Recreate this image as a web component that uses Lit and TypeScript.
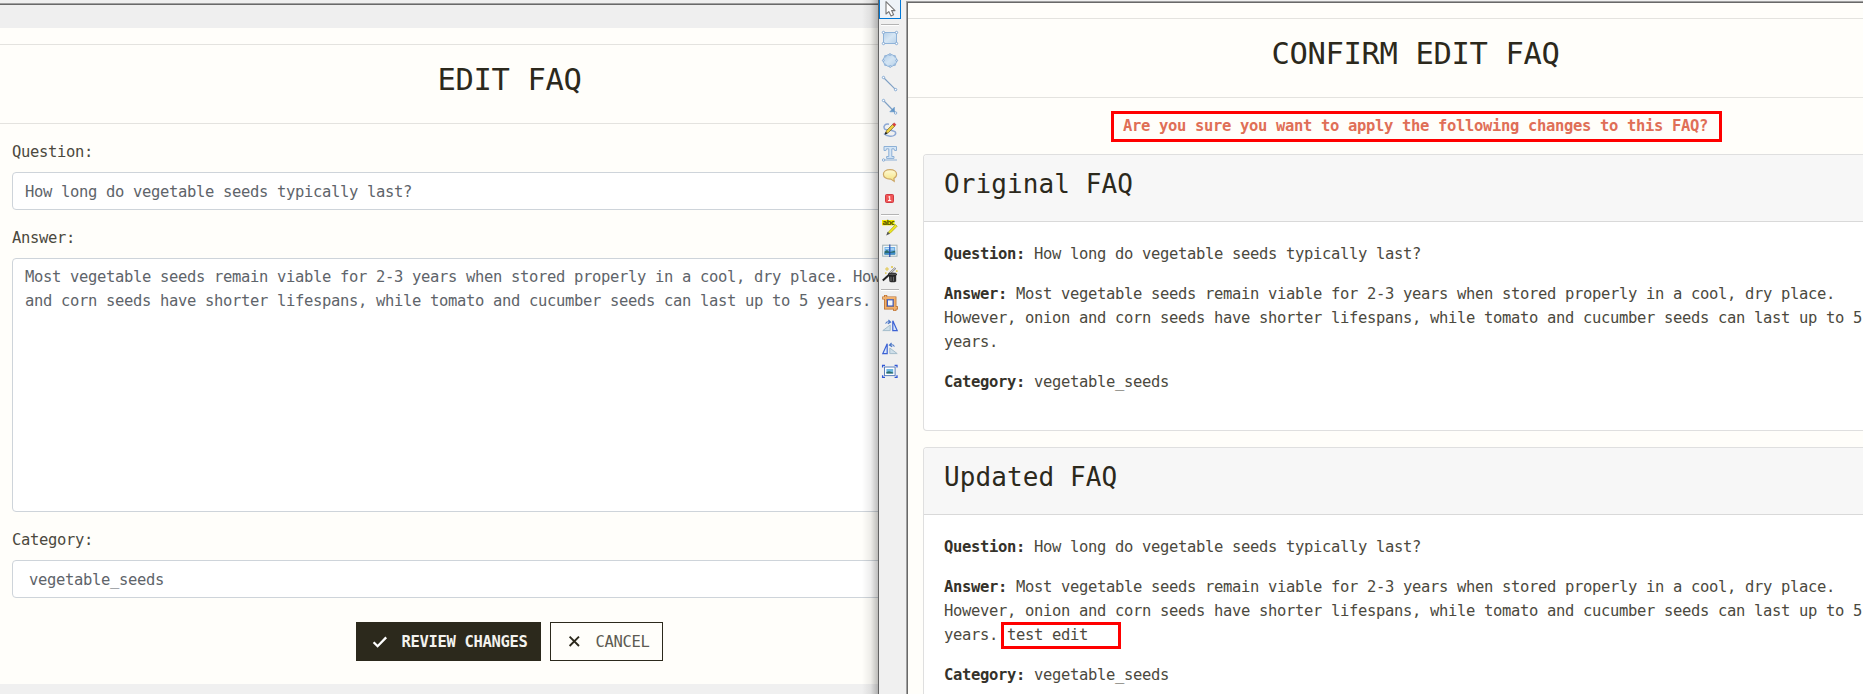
import { LitElement, html, css, svg } from "lit";
import { customElement, property } from "lit/decorators.js";

const ANSWER =
  "Most vegetable seeds remain viable for 2-3 years when stored properly in a cool, dry place. However, onion and corn seeds have shorter lifespans, while tomato and cucumber seeds can last up to 5 years.";
const QUESTION = "How long do vegetable seeds typically last?";

const handle = (x: number, y: number, r = 1.2) =>
  svg`<circle cx=${x} cy=${y} r=${r} fill="#fff" stroke="#7aa3cf" stroke-width=".9"/>`;

const icons = {
  cursor: svg`<path d="M7 2.6V15L9.8 12.6L12 17L14.6 15.8L12.6 11.6H16Z" fill="#fff" stroke="#777" stroke-width="1.1" stroke-linejoin="round"/>`,
  rect: svg`<defs><linearGradient id="g" x1="0" y1="0" x2="1" y2="1"><stop offset="0" stop-color="#b4cfe8"/><stop offset=".5" stop-color="#d6e6f4"/><stop offset="1" stop-color="#b9d2ea"/></linearGradient></defs>
    <rect x="4.5" y="5.5" width="13" height="11" fill="url(#g)" stroke="#8fb3d9"/>${handle(4.5, 5.5)}${handle(17.5, 5.5)}${handle(4.5, 16.5)}${handle(17.5, 16.5)}`,
  ellipse: svg`<defs><linearGradient id="g" x1="0" y1="0" x2="1" y2="1"><stop offset="0" stop-color="#b0cde8"/><stop offset=".5" stop-color="#d3e4f3"/><stop offset="1" stop-color="#b5d0e9"/></linearGradient></defs>
    <ellipse cx="11" cy="10.5" rx="6.8" ry="6" fill="url(#g)" stroke="#8fb3d9"/>${handle(11, 4.5, 0.9)}${handle(4.3, 10.5, 0.9)}${handle(17.7, 10.5, 0.9)}${handle(11.2, 16.5, 0.9)}${handle(6.2, 6.2, 0.7)}${handle(15.8, 6.2, 0.7)}${handle(6.2, 14.8, 0.7)}${handle(15.8, 14.8, 0.7)}`,
  line: svg`<path d="M4.5 4.5L16.6 16.6" stroke="#7e9fc4" stroke-width="1.1"/>${handle(4.5, 4.5)}${handle(16.6, 16.6)}`,
  arrow: svg`<path d="M4.5 4.5L16.6 17" stroke="#7e9fc4" stroke-width="1.1"/><path d="M15.4 11.2V15.8H10.8Z" fill="#6296c8" stroke="#6296c8" stroke-width=".6"/>${handle(4.5, 4.5)}${handle(16.6, 17)}`,
  pencil: svg`<path d="M10 5.2C6 4.6 4 7 5.4 9.6C6.6 12 15 10.5 16.4 13.2C17.6 15.6 14.5 17.6 11 17.2C8 17 6 15.6 5 14.4" fill="none" stroke="#8da8d4" stroke-width="1.5"/>
    <path d="M6.4 14.8L7.6 11.6L13.6 5.4L15.6 7.2L9.4 13.6Z" fill="#f2d340" stroke="#6b5a22" stroke-width=".7"/><path d="M13.6 5.4L15 3.8L17 5.6L15.6 7.2Z" fill="#e33a3a" stroke="#a53636" stroke-width=".4"/><path d="M5.6 15.8L6.6 12.8L8.6 14.4Z" fill="#222"/>`,
  text: svg`<path d="M5 4.5H17.5V8.5H15.6L15 6.8H12.8V14.5H15V16.4H7.6V14.5H9.8V6.8H7.5L6.9 8.5H5Z" fill="#d5e6f6" stroke="#8db0d6" stroke-width="1"/><path d="M5 18H18" stroke="#8db0d6"/>${handle(4.6, 18)}`,
  bubble: svg`<defs><linearGradient id="g" x1="0" y1="0" x2="0" y2="1"><stop offset="0" stop-color="#fffad6"/><stop offset="1" stop-color="#f4e27c"/></linearGradient></defs>
    <path d="M11 4.6C15 4.6 17.6 6.6 17.6 9.3C17.6 11.3 16.6 12.6 14.9 13.4L15.2 16.4L11.8 14.1C7 14.3 4.4 12.1 4.4 9.3C4.4 6.6 7 4.6 11 4.6Z" fill="url(#g)" stroke="#cda868" stroke-width="1.2"/>`,
  badge: svg`<rect x="6.5" y="6.5" width="8" height="8" rx="1" fill="#f05656" stroke="#cf3a44"/><path d="M9.4 9L10.7 8.4V12.8M9 12.6H12.2" fill="none" stroke="#fff" stroke-width="1"/>`,
  marker: svg`<rect x="3" y="3" width="12.5" height="5.4" fill="#f2ea00"/><text x="3.4" y="7.9" class="abc">abc</text>
    <path d="M9 15.4L16.4 7.6L18.2 9.2L11 16.4Z" fill="#f0e81c" stroke="#a5a22a" stroke-width=".7"/><path d="M7.2 18.4L8.6 14.8L11 16.8Z" fill="#555"/>`,
  picture: svg`<rect x="3.7" y="5.2" width="14.3" height="11" fill="#f6f9fa" stroke="#9db0b6"/><rect x="5.5" y="7" width="10.7" height="7.4" fill="#6fb0e6"/><path d="M5.5 11.4L8 10L10.5 12L13 11.6L16.2 10.6V14.4H5.5Z" fill="#2d6b6b"/><path d="M5.5 13.2L16.2 12.6V14.4H5.5Z" fill="#3f8fd0"/><path d="M6.4 8.4H10M11.5 9H15" stroke="#d6ecfa"/><path d="M10.8 4.6V17" stroke="#1c3fa8" stroke-width="1.1"/>`,
  wand: svg`<path d="M3.8 17.4L10.4 11.4" stroke="#222" stroke-width="2"/><path d="M10.4 10.8L16.4 5" stroke="#777" stroke-width="2"/><path d="M10.6 10.6L16.2 5.2" stroke="#eee" stroke-width="1"/><path d="M9.8 11.4H17.2V18.4C15 19.6 12 19.6 10.4 18.4Z" fill="#2c2c2c"/><ellipse cx="13.4" cy="11.4" rx="4.4" ry="1.4" fill="#555" stroke="#111" stroke-width=".8"/><path d="M12 13.8V18M14.5 13.8V18.2" stroke="#888" stroke-width=".7"/>
    <path d="M8 4V8M6 6H10M13 3V5M12 4H14M6.8 9.4V10.8M6.1 10.1H7.5M17.8 7.2V9M16.9 8.1H18.7" stroke="#dfc23a" stroke-width=".9"/>`,
  crop: svg`<path d="M3.2 6H15.8V19M6.6 3V15.8H19" fill="none" stroke="#b5692a" stroke-width="3.2"/><path d="M3.8 6H15.8V18.4M6.6 3.6V15.8H18.4" fill="none" stroke="#f0b06c" stroke-width="1.8"/><rect x="8.4" y="7.8" width="5.7" height="6.2" fill="#f4f6fa" stroke="#3558c0" stroke-width="1.1"/>`,
  flipRight: svg`<path d="M3.8 15.6L11.2 10V15.6Z" fill="#d0e0ea" stroke="#a5bdcc"/><path d="M13.8 15.6V5.8L18.2 15.6Z" fill="#d9e8fa" stroke="#3c62d4" stroke-width="1.2"/><path d="M6.6 8.6C7.4 6.8 9 6.4 11 7.2M9.4 5L11.6 7.2L8.8 8.8" fill="none" stroke="#4a76c6" stroke-width="1.1"/>`,
  flipLeft: svg`<path d="M8.2 15.6V5.8L3.8 15.6Z" fill="#d9e8fa" stroke="#3c62d4" stroke-width="1.2"/><path d="M18.2 15.6L10.8 10V15.6Z" fill="#d0e0ea" stroke="#a5bdcc"/><path d="M15.4 8.6C14.6 6.8 13 6.4 11 7.2M12.6 5L10.4 7.2L13.2 8.8" fill="none" stroke="#4a76c6" stroke-width="1.1"/>`,
  resize: svg`<rect x="5.5" y="6" width="10.6" height="8.6" fill="#fff" stroke="#5c80bc" stroke-width="1"/><rect x="7.4" y="8" width="6.8" height="4.6" fill="#6fb8e0"/><path d="M7.4 11L10 10.2L14.2 11.6V12.6H7.4Z" fill="#2f6d6a"/><path d="M3.6 6.6V4.4H6M15.6 4.4H18V6.6M18 14.2V16.4H15.6M6 16.4H3.6V14.2" fill="none" stroke="#3158d6" stroke-width="1.3"/>`,
};
type IconName = keyof typeof icons;

@customElement("tool-icon")
class ToolIcon extends LitElement {
  @property() name: IconName = "cursor";
  static styles = css`
    :host { display: block; width: 23px; height: 23px; }
    svg { display: block; }
    .abc { font: bold 7px "DejaVu Sans", sans-serif; fill: #5a5700; letter-spacing: -0.7px; }
  `;
  render() {
    return html`<svg width="23" height="23" viewBox="0 0 23 23" fill="none">${icons[this.name]}</svg>`;
  }
}

@customElement("faq-card")
class FaqCard extends LitElement {
  @property() heading = "";
  @property() added = "";
  static styles = css`
    :host { display: block; background: #fff; border: 1px solid rgba(0, 0, 0, 0.125); border-radius: 4px; margin-bottom: 16px; }
    .head { padding: 13px 20px 11px; background: #f7f7f7; border-bottom: 1px solid #d9d9d9; border-radius: 3px 3px 0 0; }
    h2 { margin: 0 0 8px; font-weight: 400; font-size: 26px; line-height: 33.6px; letter-spacing: 0.098px; color: #2c291c; }
    .body { padding: 20px; }
    p { margin: 0 0 16px; }
    b { font-weight: 700; color: #35322a; }
    .added { position: relative; }
    .added::after { content: ""; position: absolute; left: -6px; top: -4px; width: 114px; height: 21px; border: 3px solid #f00; }
  `;
  render() {
    return html`
      <div class="head"><h2>${this.heading}</h2></div>
      <div class="body">
        <p><b>Question:</b> ${QUESTION}</p>
        <p><b>Answer:</b> ${ANSWER}${this.added ? html` <span class="added">${this.added}</span>` : ""}</p>
        <p><b>Category:</b> vegetable_seeds</p>
      </div>
    `;
  }
}

@customElement("app-root")
class AppRoot extends LitElement {
  static styles = css`
    * { box-sizing: border-box; }
    :host {
      display: flex; width: 1863px; height: 694px; overflow: hidden; background: #f0f0f0;
      font-family: "DejaVu Sans Mono", monospace; font-size: 15.5px; line-height: 24px;
      letter-spacing: -0.331px; color: #4b493e;
    }
    .left { width: 878px; flex: none; overflow: hidden; position: relative; }
    .left::after { content: ""; position: absolute; right: 0; top: 0; bottom: 0; width: 16px;
      background: linear-gradient(to right, rgba(0,0,0,0), rgba(0,0,0,.07) 55%, rgba(0,0,0,.26)); }
    .edge { height: 28px; background: #efefef; padding-top: 3px; }
    .edge::before { content: ""; display: block; height: 2px; background: linear-gradient(#a0a0a0 50%, #696969 50%); }
    .form { width: 1020px; height: 656px; padding: 16px 0 0; background: #fffefa; }
    .rule { height: 1px; background: #e4e3df; }
    h1 { margin: 16px 0 24px; font-weight: 400; font-size: 30.5px; line-height: 38.4px; letter-spacing: -0.362px; text-align: center; color: #2c291c; }
    .form h1 { padding-right: 1px; }
    .fields { padding: 16px 12px 0; }
    label { display: block; margin-bottom: 8px; }
    .field { height: 38px; margin-bottom: 16px; padding: 7px 12px 5px; background: #fff; border: 1px solid #ced4da; border-radius: 4px; color: #5e646a; }
    .area { height: 254px; padding-top: 6px; }
    .select { padding-left: 16px; margin-bottom: 24px; }
    .actions { display: flex; justify-content: center; gap: 9px; padding-right: 2px; }
    .btn { height: 39px; display: flex; align-items: center; border: 1px solid #2c291c; color: #5d5b52; }
    .btn svg { display: block; flex: none; }
    .primary { width: 185px; padding-left: 15px; gap: 14px; background: #2c291c; color: #f3f2ee; font-weight: 700; }
    .cancel { width: 113px; padding-left: 17px; gap: 15px; }
    .tools { width: 30px; flex: none; border-left: 1px solid #636363; background: #f0f0f0; display: flex; flex-direction: column; align-items: flex-start; }
    .picked { width: 22px; height: 19px; border: 1px solid #0078d7; border-top: 0; background: #eef3f8; overflow: hidden; }
    .picked tool-icon { margin: -1px 0 0 -1px; }
    .sep { width: 18px; height: 2px; margin: 3px 0 1px 2px; background: linear-gradient(#b4b4b4 50%, #fff 50%); }
    .sep.first { margin-top: 5px; }
    .frame { flex: 1; min-width: 0; margin-left: -2px; position: relative; overflow: hidden; padding: 1px 0 0; background: #f0f0f0; }
    .frame-in { border-left: 1px solid #a0a0a0; border-top: 1px solid #a0a0a0; height: 693px; }
    .view { border-left: 1px solid #696969; border-top: 1px solid #696969; height: 692px; background: #fffefa; padding-top: 15px; overflow: hidden; }
    .wide { width: 1016px; }
    .wide h1 { padding-right: 1px; }
    .confirm { padding: 16px 15px 0; }
    .warn { margin: 0 0 16px; padding-right: 1px; text-align: center; font-weight: 700; color: #df6f57; }
    .warn span { position: relative; }
    .warn span::after { content: ""; position: absolute; box-sizing: border-box; left: -12px; top: -6px; width: 611px; height: 31px; border: 3px solid #f00; }
  `;
  render() {
    const first: IconName[] = ["rect", "ellipse", "line", "arrow", "pencil", "text", "bubble", "badge"];
    const second: IconName[] = ["marker", "picture", "wand"];
    const third: IconName[] = ["crop", "flipRight", "flipLeft", "resize"];
    const row = (names: IconName[]) => names.map((n) => html`<tool-icon name=${n}></tool-icon>`);
    return html`
      <section class="left">
        <div class="edge"></div>
        <div class="form">
          <div class="rule"></div>
          <h1>EDIT FAQ</h1>
          <div class="rule"></div>
          <div class="fields">
            <label>Question:</label>
            <div class="field">${QUESTION}</div>
            <label>Answer:</label>
            <div class="field area">${ANSWER}</div>
            <label>Category:</label>
            <div class="field select">vegetable_seeds</div>
            <div class="actions">
              <div class="btn primary">
                <svg width="16" height="14" viewBox="0 0 16 14"><path d="M1.6 7.2L5.6 11.2L14.2 2.4" fill="none" stroke="#fff" stroke-width="2.3"/></svg>
                <span>REVIEW CHANGES</span>
              </div>
              <div class="btn cancel">
                <svg width="13" height="13" viewBox="0 0 13 13"><path d="M1.6 1.6L11 11M11 1.6L1.6 11" stroke="#2c291c" stroke-width="1.9"/></svg>
                <span>CANCEL</span>
              </div>
            </div>
          </div>
        </div>
      </section>
      <nav class="tools">
        <div class="picked"><tool-icon name="cursor"></tool-icon></div>
        <div class="sep first"></div>
        ${row(first)}
        <div class="sep"></div>
        ${row(second)}
        <div class="sep"></div>
        ${row(third)}
      </nav>
      <section class="frame">
        <div class="frame-in">
          <div class="view">
            <div class="wide">
              <div class="rule"></div>
              <h1>CONFIRM EDIT FAQ</h1>
              <div class="rule"></div>
              <div class="confirm">
                <p class="warn"><span>Are you sure you want to apply the following changes to this FAQ?</span></p>
                <faq-card heading="Original FAQ"></faq-card>
                <faq-card heading="Updated FAQ" added="test edit"></faq-card>
              </div>
            </div>
          </div>
        </div>
      </section>
    `;
  }
}
